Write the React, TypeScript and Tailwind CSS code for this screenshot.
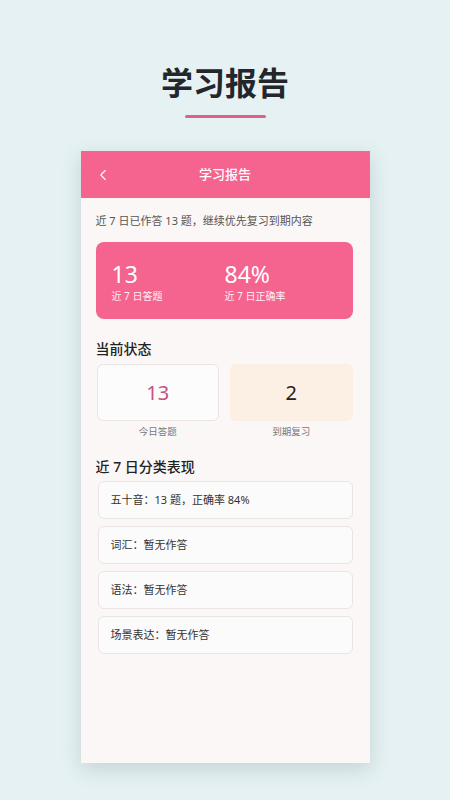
import { ChevronLeft } from "lucide-react";

const categories = ["五十音：13 题，正确率 84%", "词汇：暂无作答", "语法：暂无作答", "场景表达：暂无作答"];

export default function App() {
  return (
    <div
      className="flex min-h-[800px] w-full flex-col items-center bg-[#e5f1f2] pt-[67px]"
      style={{ fontFamily: '"Noto Sans", "Noto Sans CJK SC", sans-serif' }}
    >
      <h1 className="text-[32px] font-bold leading-none text-[#23262b]">学习报告</h1>
      <div className="mt-[16px] h-[3px] w-[81px] rounded-full bg-[#e0608b]" />

      <div className="mt-[33px] flex h-[612px] w-[289px] flex-col bg-[#fbf7f7] shadow-[0_6px_18px_rgba(80,110,115,0.22)]">
        <header className="relative flex h-[47px] items-center justify-center bg-[#f5638f]">
          <ChevronLeft className="absolute left-[13px] h-[18px] w-[18px] text-white" strokeWidth={1.5} />
          <span className="text-[13px] font-medium text-white">学习报告</span>
        </header>

        <div className="flex flex-col pl-[15px] pr-[17px] pt-[13px]">
          <p className="text-[11px] leading-[20px] text-[#555]">近 7 日已作答 13 题，继续优先复习到期内容</p>

          <div className="mt-[11px] flex h-[77px] rounded-[8px] bg-[#f5638f] pl-[16px] pt-[18px] text-white">
            <div className="w-[113px]">
              <div className="text-[23px] leading-[28px]">13</div>
              <div className="text-[10px] leading-[16px] text-white/90">近 7 日答题</div>
            </div>
            <div>
              <div className="text-[23px] leading-[28px]">84%</div>
              <div className="text-[10px] leading-[16px] text-white/90">近 7 日正确率</div>
            </div>
          </div>

          <h2 className="mt-[19px] text-[14px] font-medium leading-[22px] text-[#222]">当前状态</h2>
          <div className="mt-[4px] grid grid-cols-2 gap-[11px] pl-[1px]">
            <div className="flex flex-col items-center">
              <div className="flex h-[57px] w-full items-center justify-center rounded-[6px] border border-[#ebe4e4] bg-[#fdfcfc] text-[20px] text-[#c4527c]">
                13
              </div>
              <div className="mt-[3px] text-[9.5px] leading-[16px] text-[#777]">今日答题</div>
            </div>
            <div className="flex flex-col items-center">
              <div className="flex h-[57px] w-full items-center justify-center rounded-[6px] bg-[#fcefe3] text-[20px] text-[#222]">
                2
              </div>
              <div className="mt-[3px] text-[9.5px] leading-[16px] text-[#777]">到期复习</div>
            </div>
          </div>

          <h2 className="mt-[16px] text-[14px] font-medium leading-[22px] text-[#222]">近 7 日分类表现</h2>
          <div className="mt-[3px] flex flex-col gap-[7px] pl-[2px]">
            {categories.map((c) => (
              <div
                key={c}
                className="flex h-[38px] items-center rounded-[6px] border border-[#ebe4e4] bg-[#fcfbfb] px-[12px] text-[11px] text-[#333]"
              >
                {c}
              </div>
            ))}
          </div>
        </div>
      </div>
    </div>
  );
}
